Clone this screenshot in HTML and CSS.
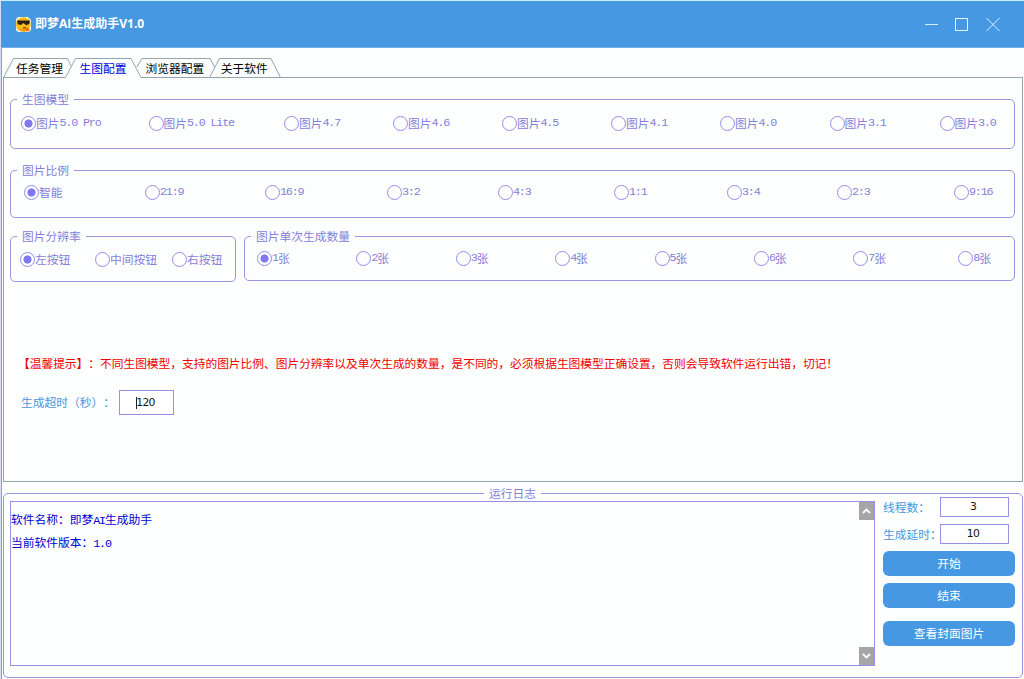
FILE: index.html
```html
<!DOCTYPE html>
<html lang="zh-CN">
<head>
<meta charset="utf-8">
<title>即梦AI生成助手V1.0</title>
<link rel="stylesheet" href="styles.css">
</head>
<body>
<div class="window">
  <header class="titlebar">
    <svg class="logo" width="17" height="17" viewBox="0 0 17 17">
      <path d="M3 1h10l3 3v10l-2 2H3l-2-2V3z" fill="#f4f1df"/>
      <circle cx="8.3" cy="8.5" r="7.3" fill="#f8bd18"/>
      <path d="M2 11c2 5 9 6 12 3l-1-3c-3 3-7 3-11 0z" fill="#f0a010"/>
      <path d="M2 4.500h13l-.8 3.600-3 1.200-2.500-2H8L6 9 2.800 8.300z" fill="#2a2113"/>
      <path d="M8 12.200l3-.6" stroke="#8b3c08" stroke-width="1.200"/>
      <path d="M11.500 11.500l3.500 2-1.500 2-2.500-1z" fill="#e56f10"/>
    </svg>
    <h1 class="title">即梦AI生成助手V1.0</h1>
    <svg class="controls" width="78" height="16" viewBox="0 0 78 16">
      <path d="M1 8.500h13" stroke="#d6edff"/>
      <rect x="31.500" y="2.500" width="12" height="12" fill="none" stroke="#e6f5ff"/>
      <path d="M62.500 2l13 13M75.500 2l-13 13" stroke="#dff0ff"/>
    </svg>
  </header>

  <nav class="tabs">
    <svg class="tab-shapes" width="1020" height="22" viewBox="0 0 1020 22">
      <g fill="none" stroke="#93a5ae">
        <path d="M.5 21.500L10.500 2.500H64.500L68 10"/>
        <path d="M134 11L139 2.500H207L211.500 11"/>
        <path d="M206.500 21.500L216.500 2.500H268L277.500 21.500"/>
        <path d="M0 21.500H62.500L72.500 2.500H128L138 21.500H1020"/>
      </g>
    </svg>
    <a class="tab">任务管理</a>
    <a class="tab active">生图配置</a>
    <a class="tab">浏览器配置</a>
    <a class="tab">关于软件</a>
  </nav>

  <main class="page">
    <fieldset class="group models">
      <legend>生图模型</legend>
      <label class="radio on"><i></i>图片<b>5.0 Pro</b></label>
      <label class="radio"><i></i>图片<b>5.0 Lite</b></label>
      <label class="radio"><i></i>图片<b>4.7</b></label>
      <label class="radio"><i></i>图片<b>4.6</b></label>
      <label class="radio"><i></i>图片<b>4.5</b></label>
      <label class="radio"><i></i>图片<b>4.1</b></label>
      <label class="radio"><i></i>图片<b>4.0</b></label>
      <label class="radio"><i></i>图片<b>3.1</b></label>
      <label class="radio"><i></i>图片<b>3.0</b></label>
    </fieldset>
    <fieldset class="group ratios">
      <legend>图片比例</legend>
      <label class="radio on"><i></i>智能</label>
      <label class="radio"><i></i><b>21:9</b></label>
      <label class="radio"><i></i><b>16:9</b></label>
      <label class="radio"><i></i><b>3:2</b></label>
      <label class="radio"><i></i><b>4:3</b></label>
      <label class="radio"><i></i><b>1:1</b></label>
      <label class="radio"><i></i><b>3:4</b></label>
      <label class="radio"><i></i><b>2:3</b></label>
      <label class="radio"><i></i><b>9:16</b></label>
    </fieldset>
    <div class="pair">
      <fieldset class="group resolution">
        <legend>图片分辨率</legend>
        <label class="radio on"><i></i>左按钮</label>
        <label class="radio"><i></i>中间按钮</label>
        <label class="radio"><i></i>右按钮</label>
      </fieldset>
      <fieldset class="group counts">
        <legend>图片单次生成数量</legend>
        <label class="radio on"><i></i><b>1</b>张</label>
        <label class="radio"><i></i><b>2</b>张</label>
        <label class="radio"><i></i><b>3</b>张</label>
        <label class="radio"><i></i><b>4</b>张</label>
        <label class="radio"><i></i><b>5</b>张</label>
        <label class="radio"><i></i><b>6</b>张</label>
        <label class="radio"><i></i><b>7</b>张</label>
        <label class="radio"><i></i><b>8</b>张</label>
      </fieldset>
    </div>
    <p class="warning">【温馨提示】：不同生图模型，支持的图片比例、图片分辨率以及单次生成的数量，是不同的，必须根据生图模型正确设置，否则会导致软件运行出错，切记！</p>
    <div class="timeout">
      <span class="field-label">生成超时（秒）：</span>
      <div class="box timeout-box"><span class="caret"></span>120</div>
    </div>
  </main>

  <fieldset class="group log">
    <legend>运行日志</legend>
    <div class="log-view">
      <div class="log-text">
        <p>软件名称：即梦<b>AI</b>生成助手</p>
        <p>当前软件版本：<b>1.0</b></p>
      </div>
      <div class="scrollbar">
        <svg width="15" height="18" viewBox="0 0 15 18"><rect width="15" height="18" fill="#a6a6a6"/><path d="M4 11l3.500-3.500L11 11" fill="none" stroke="#fff" stroke-width="1.800"/></svg>
        <svg width="15" height="18" viewBox="0 0 15 18"><rect width="15" height="18" fill="#a6a6a6"/><path d="M4 7l3.500 3.500L11 7" fill="none" stroke="#fff" stroke-width="1.800"/></svg>
      </div>
    </div>
    <div class="side">
      <div class="field"><span class="field-label">线程数：</span><div class="box">3</div></div>
      <div class="field"><span class="field-label">生成延时：</span><div class="box">10</div></div>
      <button class="btn">开始</button>
      <button class="btn">结束</button>
      <button class="btn last">查看封面图片</button>
    </div>
  </fieldset>
</div>
</body>
</html>
```
FILE: styles.css
```css
* { box-sizing: border-box; margin: 0; padding: 0; }

body {
  width: 1024px;
  height: 679px;
  overflow: hidden;
  background: #fdfefe;
  font: 11.75px/14px "Noto Sans CJK SC", sans-serif;
  text-spacing-trim: space-all;
  white-space: nowrap;
  color: #8580d8;
}

/* half-width Latin glyphs on the CJK grid */
b {
  font-family: "Liberation Mono", monospace;
  font-weight: 400;
  font-size: 11.75px;
  line-height: 1;
  letter-spacing: -1.18px;
  white-space: pre;
}

.window {
  display: flex;
  flex-direction: column;
  height: 679px;
  border-left: 1px solid #d9dcf5;
  box-shadow: inset 1px 0 #9295dc;
}

.titlebar {
  display: flex;
  align-items: center;
  height: 48px;
  padding: 0 22px 0 14px;
  background: #4698e2;
  border-top: 1px solid #c4effb;
  border-bottom: 1px solid #74aee3;
}

.logo { margin-right: 3px; }

.title {
  flex: 1;
  color: #fff;
  font: 700 12px/16px "Open Sans", "Noto Sans CJK SC", sans-serif;
}

.tabs {
  position: relative;
  display: flex;
  height: 30px;
  margin-left: 2px;
  padding: 13px 0 0 13px;
  color: #000;
}

.tab-shapes { position: absolute; left: 0; top: 8px; }
.tab { position: relative; margin-right: 16.5px; line-height: 14px; }
.tab.active { color: #0000e0; margin-right: 19px; }

.page {
  height: 404px;
  margin: 0 1px 0 2px;
  padding: 15px 7px 0 6px;
  border: 1px solid #93a5ae;
  border-top: 0;
}

.group {
  display: grid;
  align-content: start;
  border: 1px solid #9a94df;
  border-radius: 5px;
}

.group legend {
  padding: 0 5px 2px;
  line-height: 11px;
}

.radio { display: flex; align-items: center; height: 16px; }
.radio b { padding-top: 2px; }

.radio i {
  width: 15px;
  height: 15px;
  border: 1px solid #938de6;
  border-radius: 50%;
}

.radio.on i {
  background: radial-gradient(circle, #7f78f0 3.7px, transparent 4.4px);
}

.models {
  height: 56px;
  padding: 9px 0 0 10px;
  grid-template-columns: 127.5px 135.5px 109px 109px 109px 109px 109.5px 110px 70px;
}
.models legend { margin-left: -4px; }

.ratios {
  height: 54px;
  margin-top: 15px;
  padding: 7px 0 0 13px;
  grid-template-columns: 121px 120px 122px 111px 116px 113px 110px 117px 55px;
}
.ratios legend { margin-left: -7px; }

.pair { display: flex; gap: 8px; margin-top: 12px; }

.resolution {
  width: 226px;
  height: 52px;
  padding: 8px 0 0 9px;
  grid-template-columns: 75px 77px 60px;
}
.resolution legend { margin-left: -3px; }

.counts {
  flex: 1;
  height: 51px;
  padding: 7px 0 0 12px;
  grid-template-columns: repeat(6, 99.4px) 105px 50px;
}
.counts legend { margin-left: -6px; }

.warning { margin: 74px 0 0 8px; color: #f00000; letter-spacing: -.035px; }

.timeout { display: flex; align-items: center; margin: 20px 0 0 11px; }
.timeout .field-label { width: 98px; padding-bottom: 1px; }
.field-label { flex-shrink: 0; color: #4696dc; }

.box {
  display: flex;
  align-items: center;
  justify-content: center;
  width: 69px;
  height: 20px;
  border: 1px solid #9690e8;
  background: #fff;
  color: #111;
  font: 10.8px/14px "DejaVu Sans", sans-serif;
  letter-spacing: -.7px;
}
.field .box { padding-right: 3px; }

.timeout-box { width: 55px; height: 25px; padding-right: 2px; }
.caret { width: 1px; height: 12px; margin-right: -1px; background: #222; }

.log {
  display: flex;
  height: 191px;
  margin: 5px 1px 0 2px;
  padding: 0 7px 0 6px;
}

.log legend { margin: 0 auto; }

.log-view {
  display: flex;
  justify-content: space-between;
  width: 865px;
  height: 165px;
  margin-top: 1px;
  border: 1px solid #9690e8;
}

.log-text { padding-top: 5px; color: #0000cd; }
.log-text p { height: 23px; line-height: 23px; }

.scrollbar { display: flex; flex-direction: column; justify-content: space-between; }
.scrollbar svg { display: block; }

.side { width: 132px; margin: -3px 0 0 8px; }
.field { display: flex; align-items: center; justify-content: space-between; height: 20px; margin-right: 6px; }
.field + .field { margin-top: 7px; }
.field .field-label { width: 57px; padding-bottom: 1px; }

.btn {
  display: block;
  width: 132px;
  height: 25px;
  margin-top: 7px;
  padding-bottom: 1px;
  border: 0;
  border-radius: 6px;
  background: #4698e2;
  color: #fff;
  font: inherit;
}
.last { margin-top: 13px; }
```
